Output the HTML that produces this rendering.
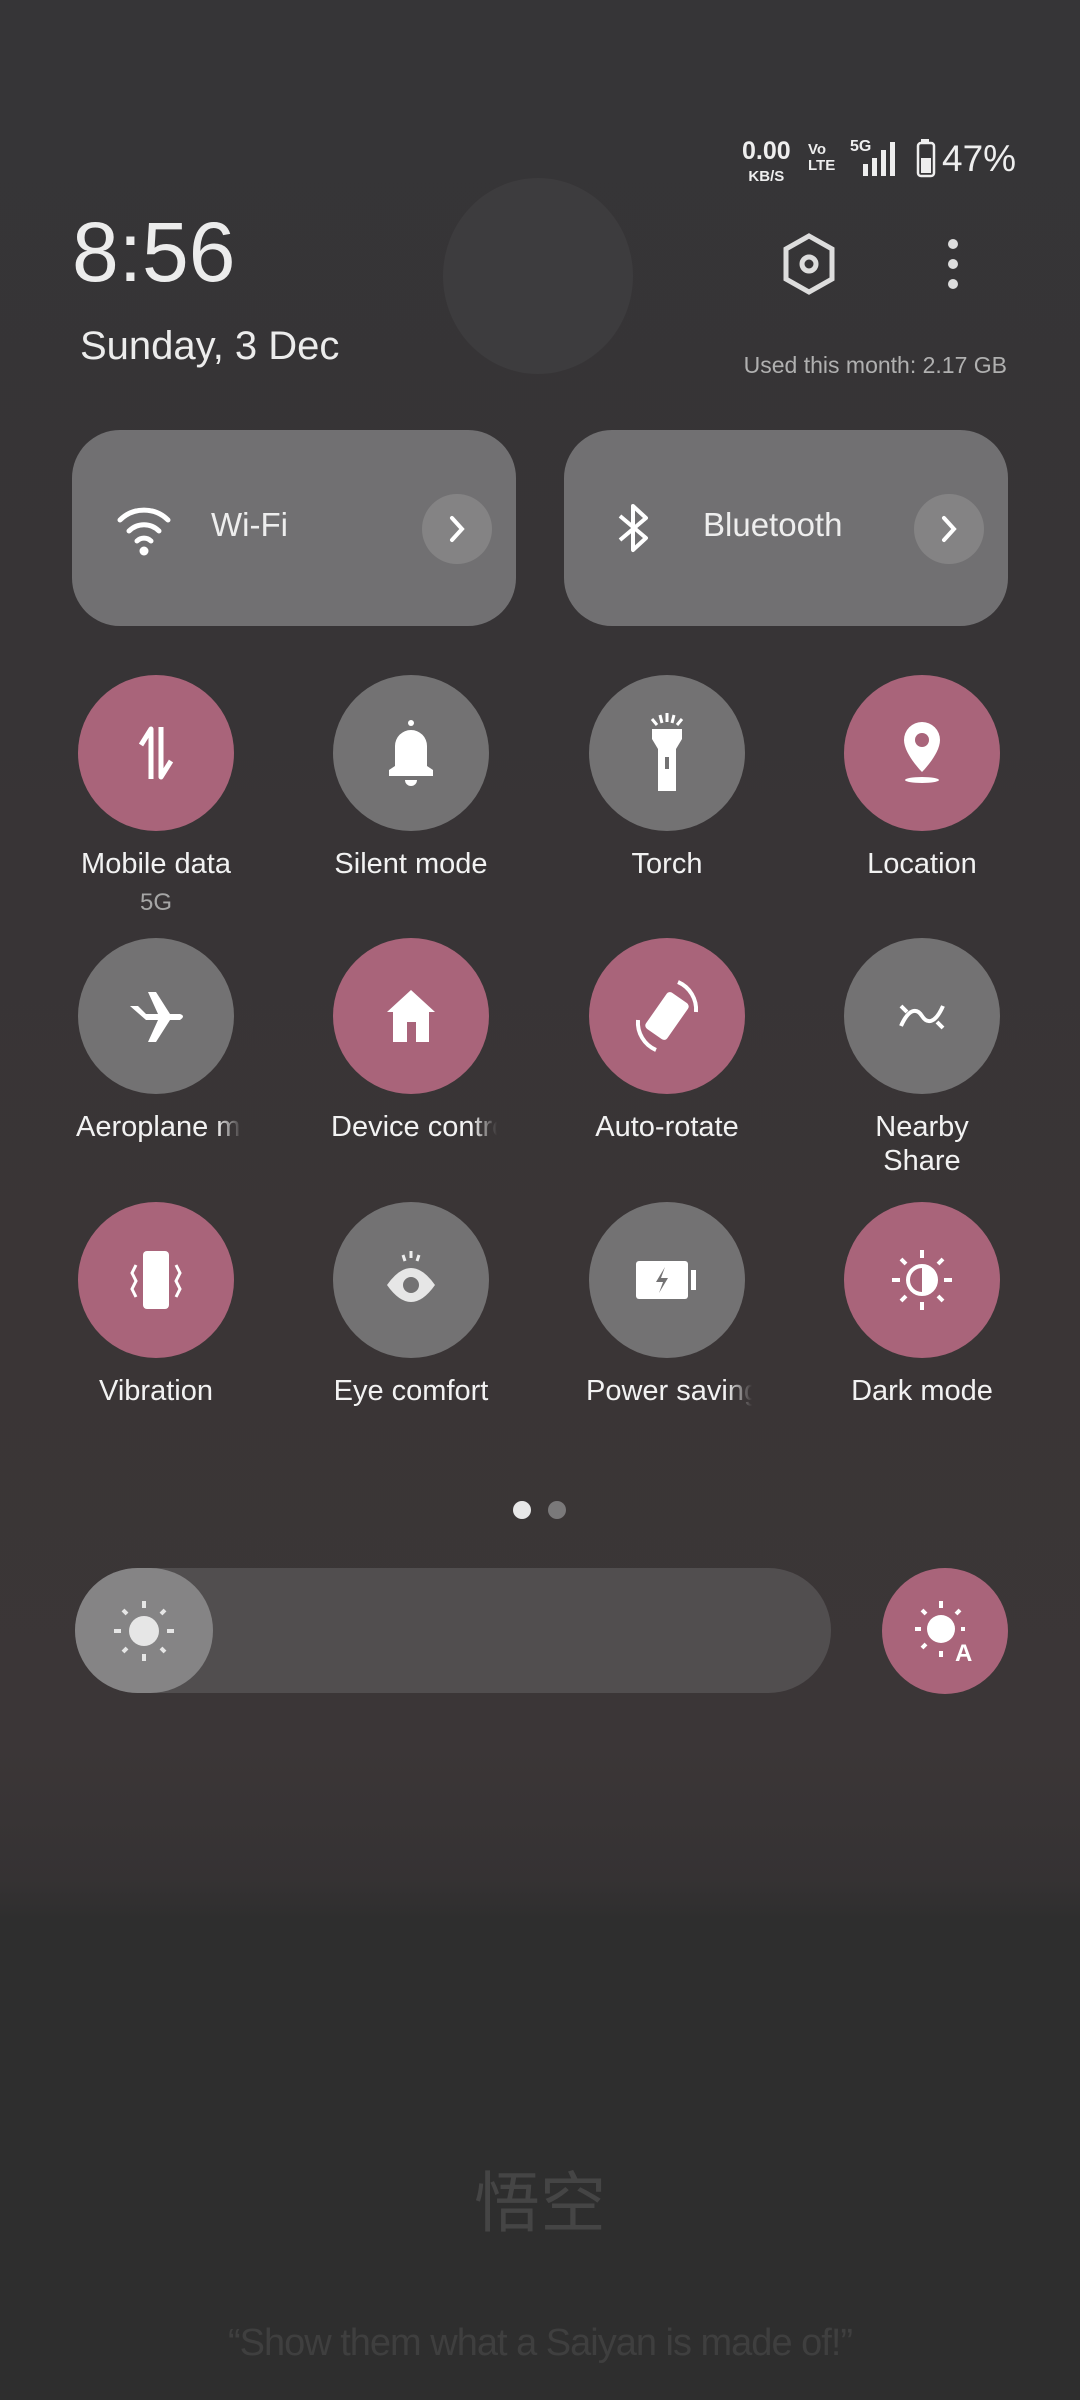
<!DOCTYPE html>
<html><head><meta charset="utf-8"><style>
*{margin:0;padding:0;box-sizing:border-box}
body{width:1080px;height:2400px;overflow:hidden;position:relative;font-family:"Liberation Sans","Noto Sans CJK SC",sans-serif;
background:linear-gradient(180deg,#363537 0px,#373436 700px,#3a3536 1300px,#3b3637 1750px,#353233 1880px,#2e2e2e 1920px,#2e2e2e 2400px);color:#fff}
.a{position:absolute}
.c{position:absolute;width:156px;height:156px;border-radius:50%;display:flex;align-items:center;justify-content:center}
.p{background:#a9647a}.g{background:#737273}
.l{position:absolute;width:230px;text-align:center;font-size:29px;color:#f2f2f2;line-height:34px;white-space:nowrap;overflow:hidden}
.lc{position:absolute;width:166px;text-align:left;font-size:29px;color:#f2f2f2;line-height:34px;white-space:nowrap;overflow:hidden;
-webkit-mask-image:linear-gradient(90deg,#000 85%,transparent);mask-image:linear-gradient(90deg,#000 85%,transparent)}
.tile{position:absolute;top:430px;width:444px;height:196px;border-radius:48px;background:#717072}
.arr{position:absolute;right:24px;top:64px;width:70px;height:70px;border-radius:50%;background:#848384;display:flex;align-items:center;justify-content:center}
</style></head><body>
<div class="a" style="left:443px;top:178px;width:190px;height:196px;border-radius:50%;background:#3d3c3e"></div>

<div class="a" style="left:742px;top:140px;font-size:25px;line-height:22px;color:#eee;text-align:center;font-weight:bold">0.00<br><span style="font-size:15px">KB/S</span></div>
<div class="a" style="left:808px;top:142px;font-size:15px;line-height:16px;color:#eee;font-weight:bold">Vo<br>LTE</div>
<div class="a" style="left:850px;top:138px;font-size:16px;color:#eee;font-weight:bold">5G</div>
<svg class="a" style="left:858px;top:140px" width="50" height="36"><rect x="5" y="24" width="5" height="12" fill="#eee"/><rect x="14" y="18" width="5" height="18" fill="#eee"/><rect x="23" y="10" width="5" height="26" fill="#eee"/><rect x="32" y="2" width="5" height="34" fill="#eee"/></svg>
<svg class="a" style="left:916px;top:138px" width="22" height="40"><rect x="5" y="1" width="8" height="4" fill="#eee"/><rect x="2" y="5" width="16" height="33" rx="3" fill="none" stroke="#eee" stroke-width="2.5"/><rect x="5" y="20" width="10" height="15" fill="#eee"/></svg>
<div class="a" style="left:942px;top:138px;font-size:37px;color:#eee">47%</div>

<div class="a" style="left:72px;top:204px;font-size:84px;color:#ececec;line-height:96px">8:56</div>
<div class="a" style="left:80px;top:324px;font-size:40px;color:#ececec">Sunday, 3 Dec</div>
<svg class="a" style="left:779px;top:232px" width="60" height="64" viewBox="0 0 60 64"><polygon points="30,4 53,17 53,47 30,60 7,47 7,17" fill="none" stroke="#ddd" stroke-width="5"/><circle cx="30" cy="32" r="7" fill="none" stroke="#ddd" stroke-width="5"/></svg>
<svg class="a" style="left:944px;top:238px" width="18" height="52"><circle cx="9" cy="6" r="5" fill="#ddd"/><circle cx="9" cy="26" r="5" fill="#ddd"/><circle cx="9" cy="46" r="5" fill="#ddd"/></svg>
<div class="a" style="right:73px;top:352px;font-size:23px;color:#b0b0b0">Used this month: 2.17 GB</div>

<div class="tile" style="left:72px">
<svg class="a" style="left:42px;top:70px" width="60" height="56" viewBox="0 0 60 56"><path d="M6 20 A34 34 0 0 1 54 20" fill="none" stroke="#fff" stroke-width="5" stroke-linecap="round"/><path d="M15 31 A21 21 0 0 1 45 31" fill="none" stroke="#fff" stroke-width="5" stroke-linecap="round"/><path d="M23 41 A10 10 0 0 1 37 41" fill="none" stroke="#fff" stroke-width="5" stroke-linecap="round"/><circle cx="30" cy="51" r="4.5" fill="#fff"/></svg>
<div class="a" style="left:139px;top:76px;font-size:33px;color:#eee">Wi-Fi</div>
<div class="arr"><svg width="20" height="28"><path d="M5 3 L15 14 L5 25" fill="none" stroke="#fff" stroke-width="4" stroke-linecap="round"/></svg></div>
</div>
<div class="tile" style="left:564px">
<svg class="a" style="left:50px;top:70px" width="40" height="56" viewBox="0 0 40 56"><path d="M6 16 L32 38 L19 50 L19 6 L32 18 L6 40" fill="none" stroke="#fff" stroke-width="4" stroke-linejoin="round"/></svg>
<div class="a" style="left:139px;top:76px;font-size:33px;color:#eee">Bluetooth</div>
<div class="arr"><svg width="20" height="28"><path d="M5 3 L15 14 L5 25" fill="none" stroke="#fff" stroke-width="4" stroke-linecap="round"/></svg></div>
</div>

<div class="c p" style="left:78px;top:675px"><svg width="50" height="60" viewBox="0 0 50 60"><path d="M20 56 L20 6 L10 22" fill="none" stroke="#fff" stroke-width="5" stroke-linejoin="round"/><path d="M30 4 L30 54 L40 38" fill="none" stroke="#fff" stroke-width="5" stroke-linejoin="round"/></svg></div>
<div class="c g" style="left:333px;top:675px"><svg width="60" height="70" viewBox="0 0 60 70"><circle cx="30" cy="5" r="3" fill="#fff"/><path d="M14 48 L14 28 A16 16 0 0 1 46 28 L46 48 L52 52 L52 58 L8 58 L8 52 Z" fill="#fff"/><path d="M24 62 A6 6 0 0 0 36 62 Z" fill="#fff"/></svg></div>
<div class="c g" style="left:589px;top:675px"><svg width="50" height="80" viewBox="0 0 50 80"><path d="M18 2 L20 10 M25 0 L25 9 M32 2 L30 10 M10 6 L15 12 M40 6 L35 12" stroke="#fff" stroke-width="3"/><path d="M10 16 L40 16 L40 26 L34 36 L34 78 L16 78 L16 36 L10 26 Z" fill="#fff"/><rect x="23" y="44" width="4" height="12" fill="#737273"/></svg></div>
<div class="c p" style="left:844px;top:675px"><svg width="50" height="70" viewBox="0 0 50 70"><path d="M25 4 A18 18 0 0 1 43 22 C43 36 25 54 25 54 C25 54 7 36 7 22 A18 18 0 0 1 25 4 Z" fill="#fff"/><circle cx="25" cy="22" r="7" fill="#a9647a"/><ellipse cx="25" cy="62" rx="17" ry="3" fill="#fff"/></svg></div>
<div class="l" style="left:41px;top:847px">Mobile data</div>
<div class="a" style="left:41px;width:230px;top:889px;text-align:center;font-size:24px;color:#a6a6a6">5G</div>
<div class="l" style="left:296px;top:847px">Silent mode</div>
<div class="l" style="left:552px;top:847px">Torch</div>
<div class="l" style="left:807px;top:847px">Location</div>

<div class="c g" style="left:78px;top:938px"><svg width="64" height="64" viewBox="0 0 64 64"><path d="M6 22 L14 22 L22 30 L34 30 L24 8 L32 8 L46 30 L56 30 Q62 32 56 36 L46 36 L32 58 L24 58 L34 36 L22 36 Z" fill="#fff"/></svg></div>
<div class="c p" style="left:333px;top:938px"><svg width="56" height="64" viewBox="0 0 56 64"><path d="M28 6 L52 28 L46 28 L46 58 L10 58 L10 28 L4 28 Z" fill="#fff"/><rect x="24" y="38" width="9" height="20" fill="#a9647a"/></svg></div>
<div class="c p" style="left:589px;top:938px"><svg width="70" height="80" viewBox="0 0 70 80"><rect x="22" y="18" width="26" height="44" rx="4" transform="rotate(35 35 40)" fill="#fff"/><path d="M46 6 A30 30 0 0 1 64 36" fill="none" stroke="#fff" stroke-width="4"/><path d="M24 74 A30 30 0 0 1 6 44" fill="none" stroke="#fff" stroke-width="4"/></svg></div>
<div class="c g" style="left:844px;top:938px"><svg width="50" height="36" viewBox="0 0 50 36"><path d="M4 28 C12 10 20 10 25 18 C30 26 38 26 46 8" fill="none" stroke="#fff" stroke-width="4"/><path d="M4 8 L10 14 M40 24 L46 30" stroke="#fff" stroke-width="4"/></svg></div>
<div class="lc" style="left:76px;top:1110px">Aeroplane mode</div>
<div class="lc" style="left:331px;top:1110px">Device control</div>
<div class="l" style="left:552px;top:1110px">Auto-rotate</div>
<div class="l" style="left:807px;top:1110px">Nearby<br>Share</div>

<div class="c p" style="left:78px;top:1202px"><svg width="60" height="70" viewBox="0 0 60 70"><rect x="17" y="6" width="26" height="58" rx="4" fill="#fff"/><path d="M10 20 L6 28 L10 36 L6 44 L10 52 M50 20 L54 28 L50 36 L54 44 L50 52" fill="none" stroke="#fff" stroke-width="3"/></svg></div>
<div class="c g" style="left:333px;top:1202px"><svg width="60" height="70" viewBox="0 0 60 70"><path d="M22 10 L24 16 M30 6 L30 13 M38 10 L36 16" stroke="#eee" stroke-width="3"/><path d="M6 40 Q30 6 54 40 Q30 74 6 40 Z" fill="#e6e6e6"/><circle cx="30" cy="40" r="8" fill="#737273"/></svg></div>
<div class="c g" style="left:589px;top:1202px"><svg width="66" height="50" viewBox="0 0 66 50"><rect x="2" y="6" width="52" height="38" rx="3" fill="#fff"/><rect x="57" y="15" width="5" height="20" fill="#fff"/><path d="M31 12 L22 27 L29 27 L25 38 L34 23 L27 23 Z" fill="#737273"/></svg></div>
<div class="c p" style="left:844px;top:1202px"><svg width="64" height="64" viewBox="0 0 64 64"><circle cx="32" cy="32" r="14" fill="none" stroke="#fff" stroke-width="4"/><path d="M32 18 A14 14 0 0 1 32 46 Z" fill="#fff"/><path d="M32 2 L32 10 M32 54 L32 62 M2 32 L10 32 M54 32 L62 32 M11 11 L16 16 M48 48 L53 53 M53 11 L48 16 M11 53 L16 48" stroke="#fff" stroke-width="4"/></svg></div>
<div class="l" style="left:41px;top:1374px">Vibration</div>
<div class="l" style="left:296px;top:1374px">Eye comfort</div>
<div class="lc" style="left:586px;top:1374px">Power saving mode</div>
<div class="l" style="left:807px;top:1374px">Dark mode</div>

<div class="a" style="left:513px;top:1501px;width:18px;height:18px;border-radius:50%;background:#e8e8e8"></div>
<div class="a" style="left:548px;top:1501px;width:18px;height:18px;border-radius:50%;background:#7a797a"></div>

<div class="a" style="left:75px;top:1568px;width:756px;height:125px;border-radius:63px;background:#514e4f"></div>
<div class="a" style="left:75px;top:1568px;width:138px;height:125px;border-radius:63px;background:#858485;display:flex;align-items:center;justify-content:center"><svg width="64" height="64" viewBox="0 0 64 64"><circle cx="32" cy="32" r="15" fill="#e6e6e6"/><path d="M32 2 L32 9 M32 55 L32 62 M2 32 L9 32 M55 32 L62 32 M11 11 L15 15 M49 49 L53 53 M53 11 L49 15 M11 53 L15 49" stroke="#e6e6e6" stroke-width="4"/></svg></div>
<div class="c p" style="left:882px;top:1568px;width:126px;height:126px"><svg width="64" height="64" viewBox="0 0 64 64"><circle cx="28" cy="30" r="14" fill="#fff"/><path d="M28 2 L28 9 M2 30 L8 30 M48 30 L52 30 M9 11 L13 15 M47 11 L43 15 M9 49 L13 45 M28 52 L28 58" stroke="#fff" stroke-width="4"/><text x="42" y="62" font-family="Liberation Sans" font-weight="bold" font-size="24" fill="#fff">A</text></svg></div>

<div class="a" style="left:0;width:1080px;top:2150px;text-align:center;font-size:66px;color:#454545">悟空</div>
<div class="a" style="left:0;width:1080px;top:2322px;text-align:center;font-size:38px;color:#3f3f3f;letter-spacing:-1px">“Show them what a Saiyan is made of!”</div>
</body></html>
